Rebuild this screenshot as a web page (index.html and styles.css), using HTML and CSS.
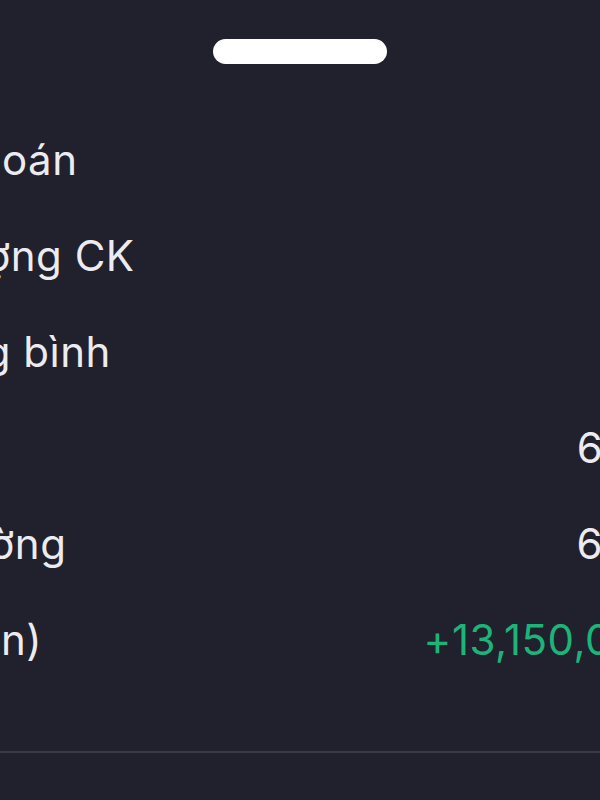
FILE: index.html
```html
<!DOCTYPE html>
<html lang="vi">
<head>
<meta charset="utf-8">
<link rel="stylesheet" href="styles.css">
</head>
<body>
<div class="sheet">
  <div class="handle"></div>
  <div class="rows">
    <div class="row"><span class="label">Mã chứng khoán</span><span class="value"></span></div>
    <div class="row"><span class="label">Tổng khối lượng CK</span><span class="value"></span></div>
    <div class="row"><span class="label">Giá vốn trung bình</span><span class="value"></span></div>
    <div class="row"><span class="label">Giá hiện tại</span><span class="value">6.55</span></div>
    <div class="row"><span class="label">Giá trị thị trường</span><span class="value">6.82</span></div>
    <div class="row"><span class="label">Lãi/lỗ (dự kiến)</span><span class="value gain">+13,150,000</span></div>
  </div>
  <div class="divider"></div>
</div>
</body>
</html>
```

FILE: styles.css
```css
html, body {
  margin: 0;
  padding: 0;
  background: #21202d;
  overflow: hidden;
}
body {
  width: 600px;
  height: 800px;
  font-family: Inter, "Noto Sans", sans-serif;
}
.sheet {
  width: 600px;
  height: 800px;
  overflow: hidden;
  background: #21202d;
}
.handle {
  width: 174px;
  height: 25px;
  margin: 39px auto 0;
  background: #ffffff;
  border-radius: 13px;
}
.rows {
  margin: 48px -66px 0 -262px;
  display: flex;
  flex-direction: column;
}
.row {
  display: flex;
  justify-content: space-between;
  align-items: center;
  height: 96px;
  font-size: 42px;
  letter-spacing: 0.5px;
  line-height: 96px;
  color: #ecebf0;
  white-space: nowrap;
}
.value.gain {
  color: #1db47a;
}
.divider {
  height: 2px;
  margin-top: 63px;
  background: #3a3a44;
}
```
